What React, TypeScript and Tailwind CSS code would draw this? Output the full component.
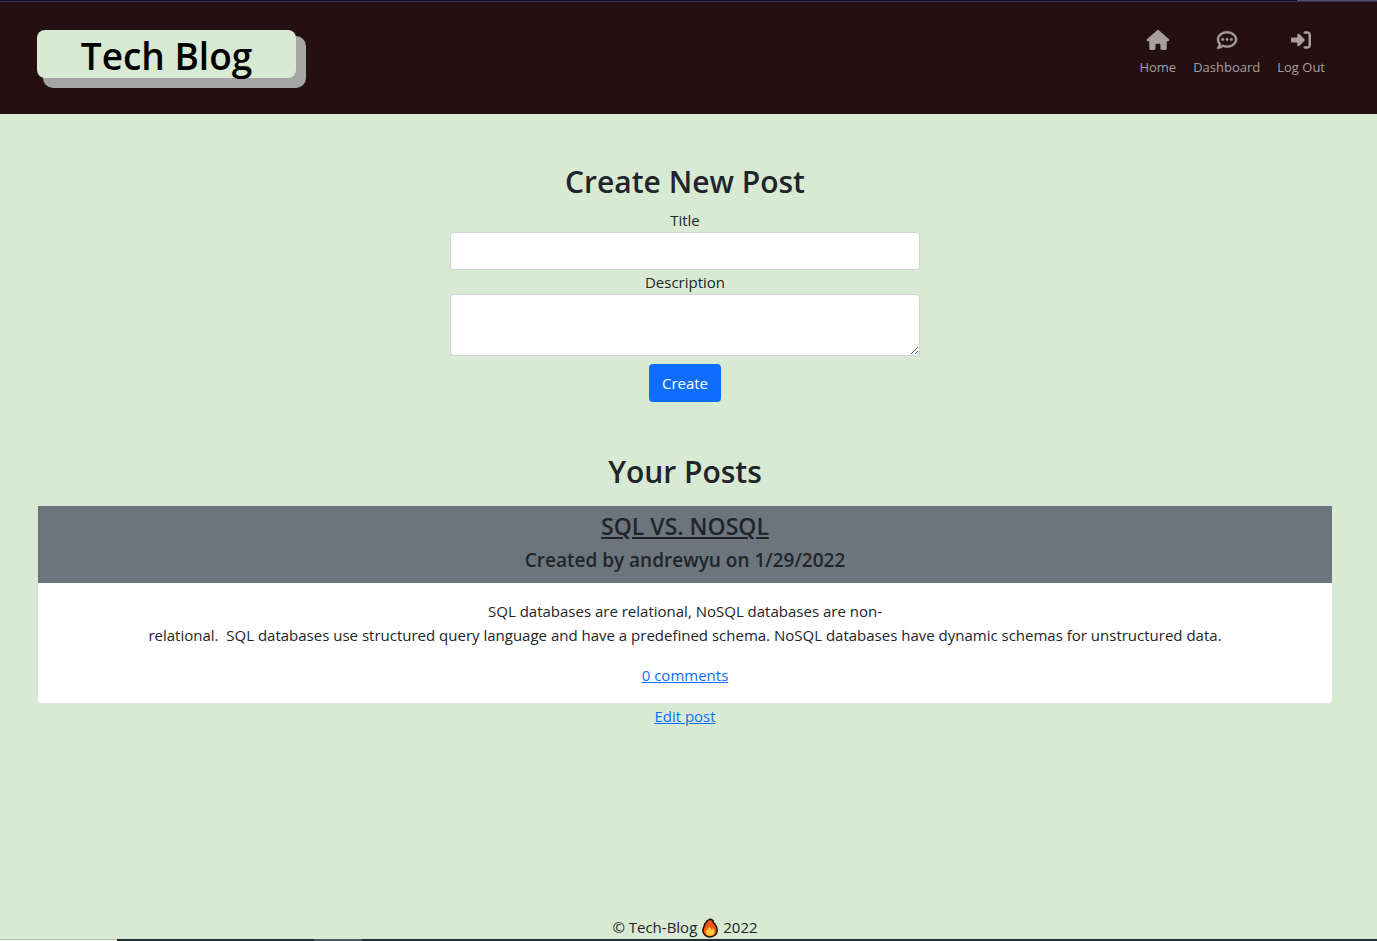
import React from "react";
import { FaHouse, FaRegCommentDots, FaRightToBracket } from "react-icons/fa6";

const navItems = [
  { label: "Home", Icon: FaHouse, iconClass: "h-5 w-6" },
  { label: "Dashboard", Icon: FaRegCommentDots, iconClass: "h-5 w-6 overflow-visible stroke-current stroke-[12]" },
  { label: "Log Out", Icon: FaRightToBracket, iconClass: "h-5 w-6" },
];

function FlameIcon() {
  return (
    <svg viewBox="0 0 16 20" className="mx-[5px] inline-block h-5 w-4 align-[-5px]" role="img" aria-label="fire">
      <path
        d="M6.600 1.900C8.500.700 11.700 1.600 11.500 5c1 .2 1.700 1 1.800 2 1.500 1.900 2 4 1.800 5.900-.3 3.600-3.300 6-7.100 6s-6.900-2.500-7.100-6.100c-.1-2 .6-3.500 1.300-4.600 0-1.600.700-2.700 1.700-3.200.2-1.400 1.400-2.500 2.700-3.100z"
        fill="#f2580c"
        stroke="#1a0d05"
        strokeWidth="1.5"
        strokeLinejoin="round"
      />
      <path
        d="M7.800 8.500c.2 1.600 1.100 2.200 1.900 3.300.7-.4 1-.9 1.100-1.700 1.300 1.300 2 2.700 1.700 4.400-.3 2-2 3.300-4.300 3.300s-4.200-1.300-4.400-3.500c-.1-1.200.3-2.200 1-3 .3.500.6.700 1 .8.200-1.400.8-2.700 2-3.600z"
        fill="#ffc83d"
      />
    </svg>
  );
}

function Header() {
  return (
    <header className="flex h-28 items-start justify-between bg-[#241011] pr-[52px] pl-[37px]">
      <a
        href="#home"
        className="mt-7 flex h-12 w-[259px] items-center justify-center rounded-lg bg-[#d8ead3] pt-1 text-[37px] font-semibold text-black shadow-[8px_8px_0_2px_#a5a5a5]"
      >
        Tech Blog
      </a>
      <nav className="mt-7 flex gap-[17px]">
        {navItems.map(({ label, Icon, iconClass }) => (
          <a key={label} href="#nav" className="flex flex-col items-center gap-[7px] text-[13px] leading-5 text-[#a79f9f]">
            <Icon className={iconClass} />
            <span>{label}</span>
          </a>
        ))}
      </nav>
    </header>
  );
}

function CreatePost() {
  return (
    <form className="mx-auto flex w-full max-w-[470px] flex-col items-center">
      <h2 className="mb-1.5 text-[30px] leading-10 font-semibold">Create New Post</h2>
      <label htmlFor="title">Title</label>
      <input id="title" type="text" className="h-[38px] w-full rounded border border-[#ced4da] bg-white px-3" />
      <label htmlFor="description">Description</label>
      <textarea
        id="description"
        className="h-[62px] w-full resize rounded border border-[#ced4da] bg-white px-3 py-1.5"
      />
      <button type="button" className="mt-2 h-[38px] rounded bg-[#0d6efd] px-[13px] text-white">
        Create
      </button>
    </form>
  );
}

function Posts() {
  return (
    <section className="mt-[50px] flex flex-col">
      <h2 className="mb-3.5 text-[30px] leading-10 font-semibold">Your Posts</h2>
      <article className="overflow-hidden rounded-b border-b border-[#dfe5df] bg-white">
        <header className="bg-[#6c757d] pt-1 pb-2">
          <h3 className="text-[23px] leading-8 font-semibold underline decoration-2 underline-offset-2">
            SQL VS. NOSQL
          </h3>
          <h4 className="pt-1 text-[19px] leading-[29px] font-semibold">Created by andrewyu on 1/29/2022</h4>
        </header>
        <div className="px-4 py-4">
          <p className="mb-4">
            SQL databases are relational, NoSQL databases are non-
            <br />
            relational.&nbsp; SQL databases use structured query language and have a predefined schema. NoSQL databases
            have dynamic schemas for unstructured data.
          </p>
          <a href="#comments" className="text-[#0d6efd] underline">
            0 comments
          </a>
        </div>
      </article>
      <a href="#edit" className="self-center text-[#0d6efd] underline">
        Edit post
      </a>
    </section>
  );
}

export default function App() {
  return (
    <div className="flex min-h-screen flex-col bg-[#d8ead3] font-['Open_Sans','Noto_Sans',sans-serif] text-[15px] leading-6 text-[#212529]">
      <div className="h-[2px] border-b border-[#3a3050] bg-[#0c0a20]">
        <div className="ml-auto h-px w-20 bg-[#5a4a6e]" />
      </div>
      <Header />
      <main className="grow pt-12 pr-[45px] pl-[38px] text-center">
        <CreatePost />
        <Posts />
      </main>
      <footer className="pr-[45px] pl-[38px] text-center">
        © Tech-Blog
        <FlameIcon />
        2022
      </footer>
      <div className="flex h-[2px] bg-[#1f2c30]">
        <div className="w-[117px] border-t border-[#b9bdb4] bg-[#f3f3f3]" />
        <div className="ml-[197px] w-12 bg-[#4c5759]" />
      </div>
    </div>
  );
}
